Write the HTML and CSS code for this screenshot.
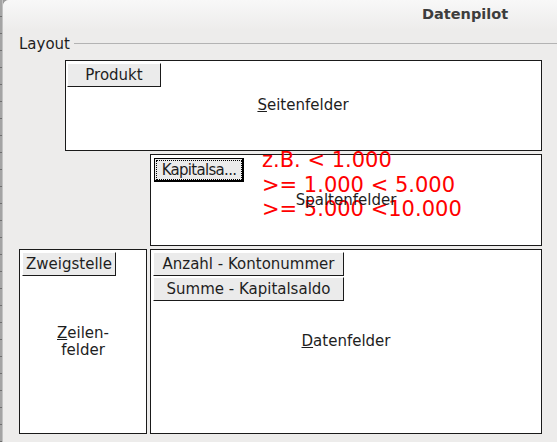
FILE: index.html
```html
<!DOCTYPE html>
<html>
<head>
	<meta charset="utf-8">
	<title>Datenpilot</title>
	<link rel="stylesheet" href="styles.css">
</head>
<body>
	<div class="backdrop"></div>
	<div class="dialog">
		<div class="titlebar">Datenpilot</div>
		<div class="group">
			<div class="legend"><span>Layout</span><span class="rule"></span></div>
			<div class="layout">
				<div class="area page_area">
					<span class="label"><u>S</u>eitenfelder</span>
					<div class="fields">
						<button class="field">Produkt</button>
					</div>
				</div>
				<div class="area column_area">
					<span class="label">S<u>p</u>altenfelder</span>
					<div class="fields">
						<button class="field focused">Kapitalsa...</button>
					</div>
					<div class="note">z.B. &lt; 1.000<br>&gt;= 1.000 &lt; 5.000<br>&gt;= 5.000 &lt;10.000</div>
				</div>
				<div class="bottom_row">
					<div class="area row_area">
						<span class="label"><u>Z</u>eilen-<br>felder</span>
						<div class="fields">
							<button class="field">Zweigstelle</button>
						</div>
					</div>
					<div class="area data_area">
						<span class="label"><u>D</u>atenfelder</span>
						<div class="fields">
							<button class="field data_field">Anzahl - Kontonummer</button>
							<button class="field data_field">Summe - Kapitalsaldo</button>
						</div>
					</div>
				</div>
			</div>
		</div>
	</div>
</body>
</html>
```

FILE: styles.css
```css
*{
	box-sizing: border-box;
}
body
{
	margin: 0;
	display: flex;
	height: 442px;
	overflow: hidden;
	background-color: #9b9b9b;
	font-family: "DejaVu Sans", sans-serif;
	font-size: 15px;
	line-height: 17px;
	color: #1e1e1e;
}
/* window behind the dialog */
.backdrop
{
	flex: none;
	width: 3px;
	background:
		linear-gradient(to right, transparent 2px, #c2c2c2 2px),
		repeating-linear-gradient(to bottom, #a4a4a4 0 16px, #6f6f6f 16px 17px);
}
.dialog
{
	flex: 1;
	min-width: 0;
	background-color: #edeceb;
	border-top-left-radius: 6px;
}
.titlebar
{
	height: 30px;
	padding: 6px 0 0 419px;
	font-weight: bold;
	font-size: 14.5px;
	color: #3d3d3d;
	white-space: nowrap;
	background: linear-gradient(#f8f8f8, #edeceb);
	border-top-left-radius: 6px;
}
.group
{
	padding: 5px 0 0 16px;
}
.legend
{
	display: flex;
	height: 18px;
	line-height: 18px;
}
.rule
{
	flex: 1;
	height: 1px;
	margin: 8px 0 0 4px;
	background-color: #b3b3b3;
}
.layout
{
	display: flex;
	flex-direction: column;
	gap: 3px;
	width: 523px;
	margin-top: 7px;
}
.area
{
	display: grid;
	position: relative;
	padding: 2px;
	border: 1px solid #1a1a1a;
	background-color: #fff;
}
.area > .label, .area > .fields
{
	grid-area: 1 / 1;
}
.label
{
	place-self: center;
	text-align: center;
	position: relative;
	z-index: 1;
}
.fields
{
	align-self: start;
	justify-self: start;
	display: flex;
	flex-direction: column;
	gap: 1px;
}
.page_area
{
	height: 91px;
	margin-left: 46px;
	padding-left: 1px;
}
.column_area
{
	height: 92px;
	margin-left: 131px;
}
.bottom_row
{
	display: flex;
	gap: 3px;
	height: 185px;
}
.row_area
{
	width: 128px;
}
.data_area
{
	flex: 1;
}
.field
{
	width: 94px;
	height: 24px;
	padding: 0;
	font: inherit;
	line-height: 22px;
	color: inherit;
	text-align: center;
	white-space: nowrap;
	overflow: hidden;
	background-color: #ebebeb;
	border: 1px solid;
	border-color: #fff #1a1a1a #1a1a1a #fff;
	border-radius: 0;
}
.focused
{
	width: 90px;
	margin: 1px;
	letter-spacing: -0.7px;
	border-color: #000;
	box-shadow: inset -1px -1px 0 #000;
	outline: 1px dotted #000;
	outline-offset: -3px;
}
.data_field
{
	width: 191px;
}
.note
{
	position: absolute;
	left: 111px;
	top: -7px;
	color: #f00;
	font-size: 21px;
	line-height: 24.5px;
	white-space: nowrap;
}
```
